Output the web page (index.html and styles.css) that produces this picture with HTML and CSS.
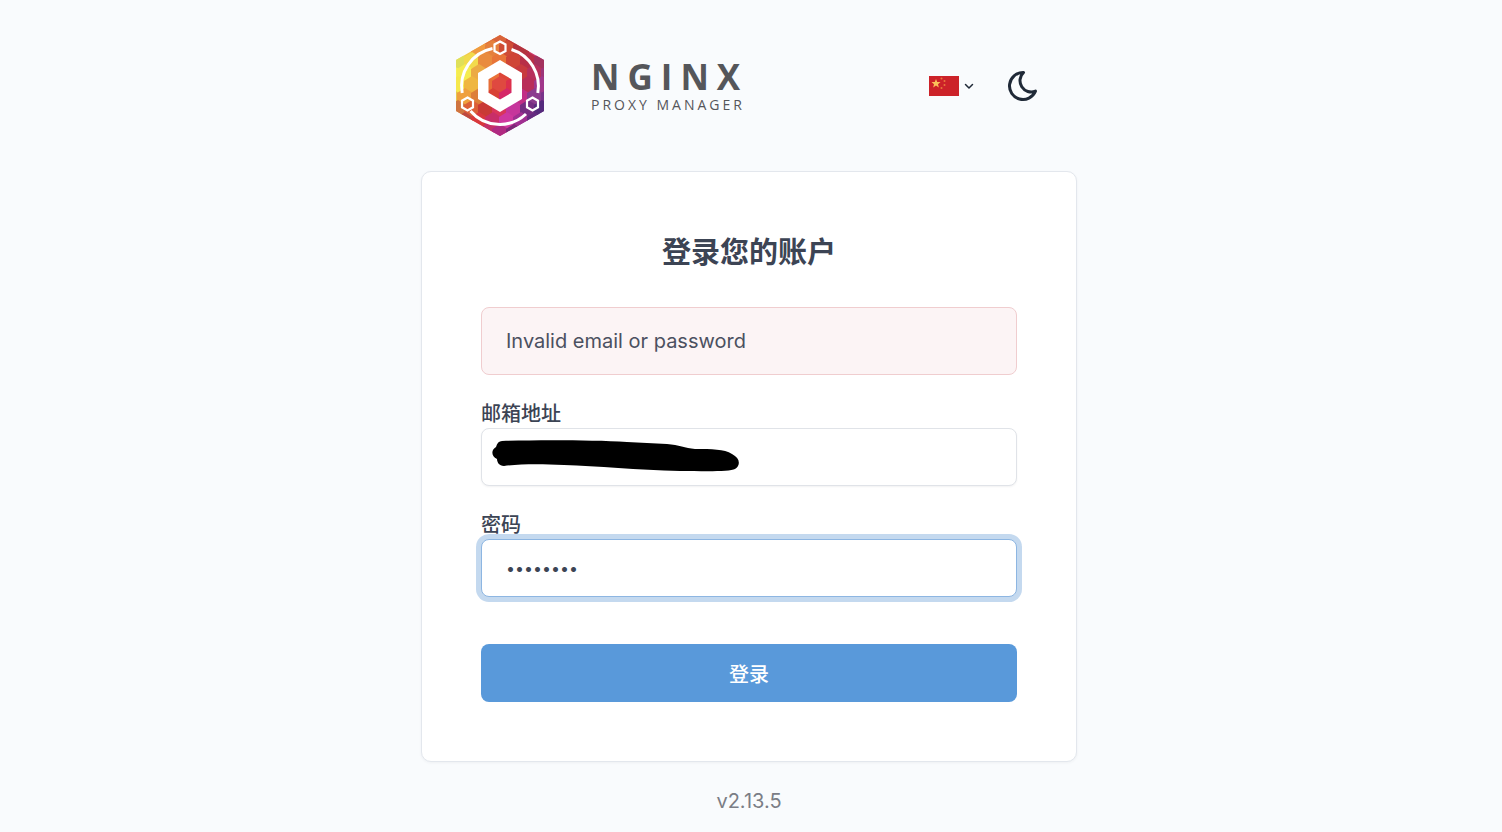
FILE: index.html
```
<!DOCTYPE html>
<html lang="zh-CN">
<head>
    <meta charset="UTF-8">
    <meta name="viewport" content="width=device-width, initial-scale=1.0">
    <title>Nginx Proxy Manager</title>
    <link rel="stylesheet" href="styles.css">
</head>
<body>
    <div class="page">
        <header class="header">
            <div class="brand">
                <svg class="logo" viewBox="0 0 88 101" aria-hidden="true">
                    <defs>
                        <clipPath id="outline"><polygon points="44,0 88,25 88,76 44,101 0,76 0,25"/></clipPath>
                        <linearGradient id="base" x1="0" y1="0.2" x2="1" y2="0.8">
                            <stop offset="0" stop-color="#f5e94c"/>
                            <stop offset="0.4" stop-color="#e5603a"/>
                            <stop offset="0.7" stop-color="#c32e78"/>
                            <stop offset="1" stop-color="#5f2a82"/>
                        </linearGradient>
                        <polygon id="cell" points="0,-9 8,-4 8,4 0,9 -8,4 -8,-4"/>
                    </defs>
                    <g clip-path="url(#outline)">
                        <rect width="88" height="101" fill="url(#base)"/>
                        <!-- mosaic, row by row -->
                        <use href="#cell" x="30" y="2" fill="#e0703a"/>
                        <use href="#cell" x="44" y="2" fill="#d9633a"/>
                        <use href="#cell" x="58" y="2" fill="#c43b3a"/>
                        <use href="#cell" x="23" y="14" fill="#f09a40"/>
                        <use href="#cell" x="37" y="14" fill="#e5803c"/>
                        <use href="#cell" x="51" y="14" fill="#cf4c35"/>
                        <use href="#cell" x="65" y="14" fill="#b3333e"/>
                        <use href="#cell" x="2" y="26" fill="#dfe05a"/>
                        <use href="#cell" x="16" y="26" fill="#f2da4c"/>
                        <use href="#cell" x="30" y="26" fill="#e98b3e"/>
                        <use href="#cell" x="44" y="26" fill="#e87538"/>
                        <use href="#cell" x="58" y="26" fill="#cf4536"/>
                        <use href="#cell" x="72" y="26" fill="#b82f47"/>
                        <use href="#cell" x="86" y="26" fill="#a3325e"/>
                        <use href="#cell" x="-5" y="38" fill="#f7f155"/>
                        <use href="#cell" x="9" y="38" fill="#f5ec50"/>
                        <use href="#cell" x="23" y="38" fill="#ecaa45"/>
                        <use href="#cell" x="37" y="38" fill="#ea7239"/>
                        <use href="#cell" x="51" y="38" fill="#dd4638"/>
                        <use href="#cell" x="65" y="38" fill="#c83a3e"/>
                        <use href="#cell" x="79" y="38" fill="#b8305c"/>
                        <use href="#cell" x="93" y="38" fill="#9d3579"/>
                        <use href="#cell" x="2" y="50" fill="#f6e84c"/>
                        <use href="#cell" x="16" y="50" fill="#efb640"/>
                        <use href="#cell" x="30" y="50" fill="#e66e38"/>
                        <use href="#cell" x="44" y="50" fill="#df4940"/>
                        <use href="#cell" x="58" y="50" fill="#dd304b"/>
                        <use href="#cell" x="72" y="50" fill="#b92d58"/>
                        <use href="#cell" x="86" y="50" fill="#a0378a"/>
                        <use href="#cell" x="-5" y="62" fill="#e7c64c"/>
                        <use href="#cell" x="9" y="62" fill="#efa03e"/>
                        <use href="#cell" x="23" y="62" fill="#dd7f3a"/>
                        <use href="#cell" x="37" y="62" fill="#d84135"/>
                        <use href="#cell" x="51" y="62" fill="#d52768"/>
                        <use href="#cell" x="65" y="62" fill="#c22e86"/>
                        <use href="#cell" x="79" y="62" fill="#8b3a8e"/>
                        <use href="#cell" x="93" y="62" fill="#79348a"/>
                        <use href="#cell" x="2" y="74" fill="#cf7440"/>
                        <use href="#cell" x="16" y="74" fill="#dc5f38"/>
                        <use href="#cell" x="30" y="74" fill="#c93a35"/>
                        <use href="#cell" x="44" y="74" fill="#d9355b"/>
                        <use href="#cell" x="58" y="74" fill="#c6359b"/>
                        <use href="#cell" x="72" y="74" fill="#762d82"/>
                        <use href="#cell" x="86" y="74" fill="#552a7c"/>
                        <use href="#cell" x="9" y="86" fill="#bd4940"/>
                        <use href="#cell" x="23" y="86" fill="#d8383c"/>
                        <use href="#cell" x="37" y="86" fill="#c82e68"/>
                        <use href="#cell" x="51" y="86" fill="#cf379f"/>
                        <use href="#cell" x="65" y="86" fill="#a02f91"/>
                        <use href="#cell" x="79" y="86" fill="#642b80"/>
                        <use href="#cell" x="30" y="98" fill="#c33368"/>
                        <use href="#cell" x="44" y="98" fill="#b02a82"/>
                        <use href="#cell" x="58" y="98" fill="#7c2877"/>
                    </g>
                    <path fill="#fff" fill-rule="evenodd" d="M44 25 66 38V64L44 77 22 64V38ZM44 37.500 32.500 44.200V57.800L44 64.500 55.500 57.800V44.200Z"/>
                    <g fill="none" stroke="#fff" stroke-width="3">
                        <path d="M6.200 58A38.500 38.500 0 0 1 36.500 13.500"/>
                        <path d="M55.500 14.500A38.500 38.500 0 0 1 81.800 58"/>
                        <path d="M14.500 76A38.500 38.500 0 0 0 70 79"/>
                        <g stroke-width="2.200">
                            <path d="M44 6.500 49.500 9.500V16L44 19 38.500 16V9.500Z"/>
                            <path d="M11.500 62.500 17 65.700V72.300L11.500 75.500 6 72.300V65.700Z"/>
                            <path d="M76.500 62.500 82 65.700V72.300L76.500 75.500 71 72.300V65.700Z"/>
                        </g>
                    </g>
                </svg>
                <div class="wordmark">
                    <span class="wordmark-name">NGINX</span>
                    <span class="wordmark-sub">PROXY MANAGER</span>
                </div>
            </div>
            <div class="actions">
                <button type="button" class="icon-button locale" aria-label="选择语言">
                    <svg class="flag" viewBox="0 0 30 20" aria-hidden="true">
                        <rect width="30" height="20" fill="#cc2229"/>
                        <polygon fill="#fbc25a" points="7,3 8.200,6 11.500,6 9,8.200 9.800,11.500 7,9.600 4.200,11.500 5,8.200 2.500,6 5.800,6"/>
                        <g fill="#e9783c">
                            <circle cx="12.500" cy="2.500" r="1"/>
                            <circle cx="15.500" cy="5" r="1"/>
                            <circle cx="15.500" cy="9" r="1"/>
                            <circle cx="12.500" cy="12" r="1"/>
                        </g>
                    </svg>
                    <svg class="chevron" viewBox="0 0 10 10" aria-hidden="true"><path d="M1.500 3.500 5 7 8.500 3.500"/></svg>
                </button>
                <button type="button" class="icon-button" aria-label="深色模式">
                    <svg class="moon" viewBox="0 0 24 24" aria-hidden="true"><path d="M12 3h.393a7.500 7.500 0 0 0 7.920 12.446A9 9 0 1 1 12 2.992z"/></svg>
                </button>
            </div>
        </header>

        <main class="card">
            <h1 class="title">登录您的账户</h1>
            <div class="alert" role="alert">Invalid email or password</div>
            <form>
                <div class="field">
                    <label class="label" for="email">邮箱地址</label>
                    <div class="input-wrap">
                        <input class="input" id="email" name="email" type="email">
                        <svg class="redaction" viewBox="0 0 247 32" aria-hidden="true">
                            <path d="M10 1C45 0 100 0 135 2L175 4C187 5 193 8 203 9C220 9 232 9 240 14C248 18 249 25 243 29C238 32 211 31 188 31C145 30 105 26 72 25C48 24 28 24 12 26C7 26 5 22 5 19C-1 16-1 10 4 7C5 3 7 1 10 1Z"/>
                        </svg>
                    </div>
                </div>
                <div class="field">
                    <label class="label" for="password">密码</label>
                    <input class="input input-active" id="password" name="password" type="password" value="changeme">
                </div>
                <button type="submit" class="submit">登录</button>
            </form>
        </main>

        <footer class="footer">v2.13.5</footer>
    </div>
</body>
</html>
```
FILE: styles.css
```
/* General */
* {
    box-sizing: border-box;
}

body {
    margin: 0;
    padding-right: 4px;
    min-height: 100vh;
    background-color: #f9fbfd;
    color: #3c4454;
    font-family: Inter, "Noto Sans CJK SC", sans-serif;
    font-size: 20px;
    line-height: 28px;
}

.page {
    max-width: 656px;
    margin: 0 auto;
}

/* Header */
.header {
    display: flex;
    justify-content: space-between;
    align-items: center;
    padding: 35px 40px 35px 35px;
}

.brand {
    display: flex;
    align-items: center;
    gap: 47px;
}

.logo {
    display: block;
    width: 88px;
    height: 101px;
}

.wordmark {
    display: flex;
    flex-direction: column;
    padding-top: 3px;
    color: #55565a;
    font-family: "Open Sans", sans-serif;
}

.wordmark-name {
    font-size: 35px;
    font-weight: 700;
    line-height: 36px;
    letter-spacing: 8px;
}

.wordmark-sub {
    font-size: 14px;
    line-height: 20px;
    letter-spacing: 3px;
}

.actions {
    display: flex;
    align-items: center;
    gap: 35px;
}

.icon-button {
    display: flex;
    align-items: center;
    padding: 0;
    border: none;
    background: none;
    color: #1f2937;
    cursor: pointer;
}

.locale {
    gap: 5px;
}

.flag {
    width: 30px;
    height: 20px;
}

.chevron,
.moon {
    fill: none;
    stroke: currentColor;
    stroke-width: 2;
    stroke-linecap: round;
    stroke-linejoin: round;
}

.chevron {
    width: 10px;
    height: 10px;
    stroke-width: 1.5;
}

.moon {
    width: 36px;
    height: 36px;
    margin: 0 -4px;
}

/* Card */
.card {
    padding: 60px 59px 59px;
    border: 1px solid #e3e7ed;
    border-radius: 10px;
    background: #fff;
    box-shadow: 0 1px 3px rgba(31, 41, 55, 0.05);
}

.title {
    margin: 0;
    padding: 1px 0 34px;
    font-size: 29px;
    font-weight: 700;
    line-height: 40px;
    text-align: center;
}

.alert {
    margin-bottom: 25px;
    padding: 19px 24px;
    border: 1px solid #f0cdcf;
    border-radius: 8px;
    background: #fcf4f5;
    color: #4b5060;
}

/* Form */
.field {
    margin-bottom: 25px;
}

.label {
    display: block;
    font-weight: 500;
}

.input-wrap {
    position: relative;
}

.input {
    display: block;
    width: 100%;
    height: 58px;
    padding: 0 24px;
    border: 1px solid #e0e3e8;
    border-radius: 8px;
    outline: none;
    background: #fff;
    color: #3c4454;
    font-family: inherit;
    font-size: 20px;
    box-shadow: 0 1px 2px rgba(31, 41, 55, 0.06);
}

.input[type="password"] {
    font-size: 16px;
}

.input-active,
.input:focus {
    border-color: #8db6e2;
    box-shadow: 0 0 0 5px #c4d9ef;
}

/* Marker stroke over the address */
.redaction {
    position: absolute;
    top: 12px;
    left: 11px;
    width: 247px;
    height: 32px;
}

.submit {
    display: block;
    width: 100%;
    height: 58px;
    margin-top: 47px;
    border: none;
    border-radius: 8px;
    background: #5999da;
    color: #fff;
    font-family: inherit;
    font-size: 20px;
    font-weight: 500;
    cursor: pointer;
}

/* Footer */
.footer {
    padding: 25px 0 16px;
    color: #7b7e86;
    text-align: center;
}
```
